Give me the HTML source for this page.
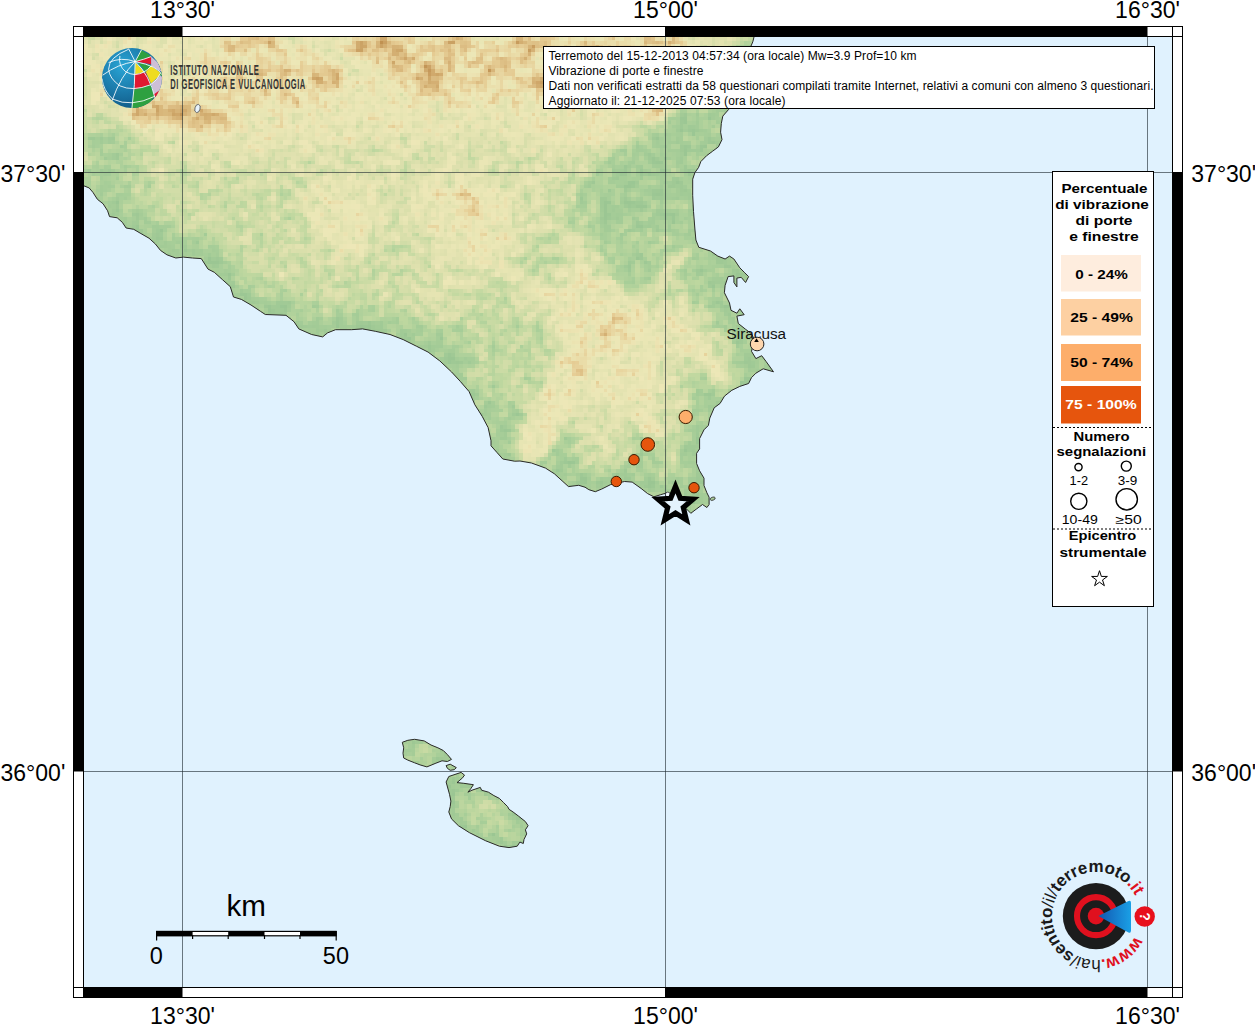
<!DOCTYPE html>
<html><head><meta charset="utf-8">
<style>
html,body{margin:0;padding:0;background:#fff;width:1255px;height:1024px;overflow:hidden}
svg{display:block;font-family:"Liberation Sans",sans-serif}
</style></head><body>
<svg width="1255" height="1024" viewBox="0 0 1255 1024">
<defs>
<clipPath id="mapclip"><rect x="84" y="37" width="1088" height="950"/></clipPath>
<clipPath id="landclip"><path d="M84,36 L754,36 L754,37 L752.8,41.8 L751,46 L748,60 L741,80 L733,100 L728.6,109.5 L722.8,116.1 L721.3,123.5 L720.6,132.2 L722,139.6 L718.4,146.9 L712.5,151.3 L706.6,155.7 L700.8,161.6 L698.6,167.4 L694.9,172.6 L692.7,179.2 L692.7,195.3 L693.5,211.4 L694.9,229 L695.9,240 L698.8,247.3 L710.5,251 L717.8,256.1 L725.1,259 L729.5,256.1 L733.9,259 L739.8,267.8 L744.2,272.2 L748.6,276.6 L745.6,282.5 L741.2,277.3 L736.9,278.1 L736.9,286.9 L733.9,282.5 L733.9,275.9 L728.1,276.6 L725.1,285.4 L724.4,292.7 L729.5,303 L731,310.3 L736.9,313.2 L739.8,308.8 L744.2,314.7 L736.9,316.1 L738.3,323.5 L745.6,329.3 L751.5,333.7 L754.4,339.6 L751.5,351.3 L755.9,358.6 L761.7,355.7 L766.1,361.5 L773.5,371.8 L763.2,368.8 L755.9,373.2 L751.5,377.6 L748.6,383.5 L739.8,386.4 L731.8,390.3 L724.5,396.1 L720.1,403.4 L714.2,407.8 L709.8,418.1 L708.4,425.4 L704,429.8 L699.6,438.6 L699.6,448.9 L696.6,453.3 L696.6,463.5 L699.6,470.8 L704,478.2 L704,485.5 L706.9,492.8 L709.1,497.2 L709.1,504.5 L706.9,507.5 L702.5,504.5 L696.6,508.9 L690.8,513.3 L686.4,508.9 L678,503 L670,496 L666.7,492.9 L660.3,494.8 L653.9,496.8 L647.6,493.6 L641.2,488.5 L632.2,482.1 L624.6,481.5 L610.6,484.6 L601.6,489.1 L595.3,491.7 L588.9,489.7 L585,487.2 L578.7,485.3 L568.5,486.6 L562.1,480.8 L554.4,473.8 L545.5,468.1 L531.5,463 L520,461 L514.5,461.2 L502.8,459 L496.9,452.4 L491,445.8 L491,440.7 L488.1,427.5 L482.3,416.5 L474.9,404.8 L469.1,391.6 L460.3,381.4 L451.5,371.9 L439.8,360.9 L428.1,352.1 L416.4,346.2 L403.2,339.6 L390,334.5 L375.3,331.3 L362.6,328.9 L351.4,329.7 L335.5,329.7 L327.5,332.9 L322.7,336.9 L311.6,334.5 L298.8,328.9 L294,321.7 L286,315.3 L265.3,314.5 L260.6,311.4 L251,305 L241.4,299.4 L233.5,297 L230.3,286.7 L222.3,279.5 L214.3,272.3 L208,269.1 L201.3,258.6 L192.4,258 L183.5,257.1 L175.8,258 L166.9,254.8 L160.5,250.4 L155.4,244 L149,238.2 L140.1,233.1 L133.7,229.3 L126.1,228 L122.3,222.3 L117.2,217.8 L109.5,216.6 L107.6,210.8 L103.1,203.8 L97.4,199.3 L92.9,192.3 L89.1,187.9 L84,185.9 Z M402.3,742.3 L407.8,740.3 L414.6,739.3 L424.2,740.9 L431,745 L437.9,747.8 L443.3,750.5 L447.4,754.6 L451.5,759.4 L447.4,761.5 L442,760.8 L435.1,763.5 L426.9,766.9 L420.1,764.9 L414.6,762.8 L407.8,760.1 L403.7,758 L403,753.2 L403.7,747.8 Z M446.1,765.6 L450.2,764.2 L456.3,767.6 L454.3,769.7 L450.2,770.3 L447.4,768.3 Z M461.1,772.4 L464.5,775.1 L462.5,777.9 L457,782.6 L463.8,783.3 L473.4,784.7 L470.7,788.8 L467.9,792.2 L472,790.2 L480.3,787.4 L481.6,790.2 L488.5,792.2 L493.9,795.6 L499.4,798.4 L503.5,802.5 L507.6,806.6 L509,809.3 L513.1,812 L518.5,816.1 L525.4,821.6 L528.1,825.7 L525.4,829.8 L526.7,833.9 L524,839.4 L523.3,843.5 L519.9,842.1 L517.2,846.2 L509,847.6 L499.4,846.2 L485.7,840.8 L469.3,832.6 L458.4,825.7 L451.5,818.9 L448.8,812 L450.2,806.6 L450.9,801.1 L449.5,794.3 L446.1,782 L448.8,776.5 Z"/></clipPath>
<filter id="b5" x="-50%" y="-50%" width="200%" height="200%"><feGaussianBlur stdDeviation="5"/></filter>
<filter id="b6" x="-50%" y="-50%" width="200%" height="200%"><feGaussianBlur stdDeviation="6"/></filter>
<filter id="b8" x="-50%" y="-50%" width="200%" height="200%"><feGaussianBlur stdDeviation="8"/></filter>
<filter id="b10" x="-50%" y="-50%" width="200%" height="200%"><feGaussianBlur stdDeviation="10"/></filter>
<filter id="b12" x="-50%" y="-50%" width="200%" height="200%"><feGaussianBlur stdDeviation="12"/></filter>
<filter id="b16" x="-50%" y="-50%" width="200%" height="200%"><feGaussianBlur stdDeviation="16"/></filter>
<filter id="pix" x="84" y="37" width="700" height="830" filterUnits="userSpaceOnUse" color-interpolation-filters="sRGB">
 <feFlood x="85" y="38" width="1" height="1" flood-color="#000"/>
 <feComposite width="4" height="4"/>
 <feTile result="grid"/>
 <feComposite in="SourceGraphic" in2="grid" operator="in" result="dots"/>
 <feMorphology in="dots" operator="dilate" radius="1.5"/>
</filter>
<filter id="hypso" x="0" y="0" width="1255" height="1024" filterUnits="userSpaceOnUse" color-interpolation-filters="sRGB">
 <feTurbulence type="fractalNoise" baseFrequency="0.09" numOctaves="3" seed="5" result="n0"/>
 <feColorMatrix in="n0" type="matrix" values="1 0 0 0 0  1 0 0 0 0  1 0 0 0 0  0 0 0 0 1" result="n"/>
 <feComposite in="SourceGraphic" in2="n" operator="arithmetic" k1="0" k2="1" k3="0.55" k4="-0.275" result="e"/>
 <feComponentTransfer in="e">
  <feFuncR type="table" tableValues="0.61 0.66 0.76 0.87 0.93 0.90 0.82 0.74"/>
  <feFuncG type="table" tableValues="0.78 0.81 0.85 0.88 0.91 0.80 0.67 0.55"/>
  <feFuncB type="table" tableValues="0.58 0.60 0.63 0.68 0.72 0.58 0.43 0.30"/>
  <feFuncA type="linear" slope="0" intercept="1"/>
 </feComponentTransfer>
</filter>
<radialGradient id="globeg" cx="0.35" cy="0.3" r="0.8">
 <stop offset="0" stop-color="#2aa6d6"/><stop offset="0.55" stop-color="#1a78a8"/><stop offset="1" stop-color="#0f5580"/>
</radialGradient>
<linearGradient id="megag" x1="0" y1="0" x2="1" y2="0">
 <stop offset="0" stop-color="#1060b0"/><stop offset="1" stop-color="#20a8e8"/>
</linearGradient>
<clipPath id="globeclip"><circle cx="512" cy="512" r="452"/></clipPath>
</defs>
<g clip-path="url(#mapclip)">
<rect x="84" y="37" width="1088" height="950" fill="#e0f2fe"/>
<path d="M84,36 L754,36 L754,37 L752.8,41.8 L751,46 L748,60 L741,80 L733,100 L728.6,109.5 L722.8,116.1 L721.3,123.5 L720.6,132.2 L722,139.6 L718.4,146.9 L712.5,151.3 L706.6,155.7 L700.8,161.6 L698.6,167.4 L694.9,172.6 L692.7,179.2 L692.7,195.3 L693.5,211.4 L694.9,229 L695.9,240 L698.8,247.3 L710.5,251 L717.8,256.1 L725.1,259 L729.5,256.1 L733.9,259 L739.8,267.8 L744.2,272.2 L748.6,276.6 L745.6,282.5 L741.2,277.3 L736.9,278.1 L736.9,286.9 L733.9,282.5 L733.9,275.9 L728.1,276.6 L725.1,285.4 L724.4,292.7 L729.5,303 L731,310.3 L736.9,313.2 L739.8,308.8 L744.2,314.7 L736.9,316.1 L738.3,323.5 L745.6,329.3 L751.5,333.7 L754.4,339.6 L751.5,351.3 L755.9,358.6 L761.7,355.7 L766.1,361.5 L773.5,371.8 L763.2,368.8 L755.9,373.2 L751.5,377.6 L748.6,383.5 L739.8,386.4 L731.8,390.3 L724.5,396.1 L720.1,403.4 L714.2,407.8 L709.8,418.1 L708.4,425.4 L704,429.8 L699.6,438.6 L699.6,448.9 L696.6,453.3 L696.6,463.5 L699.6,470.8 L704,478.2 L704,485.5 L706.9,492.8 L709.1,497.2 L709.1,504.5 L706.9,507.5 L702.5,504.5 L696.6,508.9 L690.8,513.3 L686.4,508.9 L678,503 L670,496 L666.7,492.9 L660.3,494.8 L653.9,496.8 L647.6,493.6 L641.2,488.5 L632.2,482.1 L624.6,481.5 L610.6,484.6 L601.6,489.1 L595.3,491.7 L588.9,489.7 L585,487.2 L578.7,485.3 L568.5,486.6 L562.1,480.8 L554.4,473.8 L545.5,468.1 L531.5,463 L520,461 L514.5,461.2 L502.8,459 L496.9,452.4 L491,445.8 L491,440.7 L488.1,427.5 L482.3,416.5 L474.9,404.8 L469.1,391.6 L460.3,381.4 L451.5,371.9 L439.8,360.9 L428.1,352.1 L416.4,346.2 L403.2,339.6 L390,334.5 L375.3,331.3 L362.6,328.9 L351.4,329.7 L335.5,329.7 L327.5,332.9 L322.7,336.9 L311.6,334.5 L298.8,328.9 L294,321.7 L286,315.3 L265.3,314.5 L260.6,311.4 L251,305 L241.4,299.4 L233.5,297 L230.3,286.7 L222.3,279.5 L214.3,272.3 L208,269.1 L201.3,258.6 L192.4,258 L183.5,257.1 L175.8,258 L166.9,254.8 L160.5,250.4 L155.4,244 L149,238.2 L140.1,233.1 L133.7,229.3 L126.1,228 L122.3,222.3 L117.2,217.8 L109.5,216.6 L107.6,210.8 L103.1,203.8 L97.4,199.3 L92.9,192.3 L89.1,187.9 L84,185.9 Z M402.3,742.3 L407.8,740.3 L414.6,739.3 L424.2,740.9 L431,745 L437.9,747.8 L443.3,750.5 L447.4,754.6 L451.5,759.4 L447.4,761.5 L442,760.8 L435.1,763.5 L426.9,766.9 L420.1,764.9 L414.6,762.8 L407.8,760.1 L403.7,758 L403,753.2 L403.7,747.8 Z M446.1,765.6 L450.2,764.2 L456.3,767.6 L454.3,769.7 L450.2,770.3 L447.4,768.3 Z M461.1,772.4 L464.5,775.1 L462.5,777.9 L457,782.6 L463.8,783.3 L473.4,784.7 L470.7,788.8 L467.9,792.2 L472,790.2 L480.3,787.4 L481.6,790.2 L488.5,792.2 L493.9,795.6 L499.4,798.4 L503.5,802.5 L507.6,806.6 L509,809.3 L513.1,812 L518.5,816.1 L525.4,821.6 L528.1,825.7 L525.4,829.8 L526.7,833.9 L524,839.4 L523.3,843.5 L519.9,842.1 L517.2,846.2 L509,847.6 L499.4,846.2 L485.7,840.8 L469.3,832.6 L458.4,825.7 L451.5,818.9 L448.8,812 L450.2,806.6 L450.9,801.1 L449.5,794.3 L446.1,782 L448.8,776.5 Z" fill="#c9d7a2"/>
<g clip-path="url(#landclip)">
<g filter="url(#pix)">
<g filter="url(#hypso)">
<rect x="84" y="37" width="700" height="830" fill="#6a6a6a"/>
<g filter="url(#b12)" fill="#585858">
 <polygon points="84,172 300,172 380,200 420,260 400,330 300,325 200,262 84,190"/>
</g>
<path d="M754,37 L752.8,41.8 L751,46 L748,60 L741,80 L733,100 L728.6,109.5 L722.8,116.1 L721.3,123.5 L720.6,132.2 L722,139.6 L718.4,146.9 L712.5,151.3 L706.6,155.7 L700.8,161.6 L698.6,167.4 L694.9,172.6 L692.7,179.2 L692.7,195.3 L693.5,211.4 L694.9,229 L695.9,240 L698.8,247.3 L710.5,251 L717.8,256.1 L725.1,259 L729.5,256.1 L733.9,259 L739.8,267.8 L744.2,272.2 L748.6,276.6 L745.6,282.5 L741.2,277.3 L736.9,278.1 L736.9,286.9 L733.9,282.5 L733.9,275.9 L728.1,276.6 L725.1,285.4 L724.4,292.7 L729.5,303 L731,310.3 L736.9,313.2 L739.8,308.8 L744.2,314.7 L736.9,316.1 L738.3,323.5 L745.6,329.3 L751.5,333.7 L754.4,339.6 L751.5,351.3 L755.9,358.6 L761.7,355.7 L766.1,361.5 L773.5,371.8 L763.2,368.8 L755.9,373.2 L751.5,377.6 L748.6,383.5 L739.8,386.4 L731.8,390.3 L724.5,396.1 L720.1,403.4 L714.2,407.8 L709.8,418.1 L708.4,425.4 L704,429.8 L699.6,438.6 L699.6,448.9 L696.6,453.3 L696.6,463.5 L699.6,470.8 L704,478.2 L704,485.5 L706.9,492.8 L709.1,497.2 L709.1,504.5 L706.9,507.5 L702.5,504.5 L696.6,508.9 L690.8,513.3 L686.4,508.9 L678,503 L670,496 L666.7,492.9 L660.3,494.8 L653.9,496.8 L647.6,493.6 L641.2,488.5 L632.2,482.1 L624.6,481.5 L610.6,484.6 L601.6,489.1 L595.3,491.7 L588.9,489.7 L585,487.2 L578.7,485.3 L568.5,486.6 L562.1,480.8 L554.4,473.8 L545.5,468.1 L531.5,463 L520,461 L514.5,461.2 L502.8,459 L496.9,452.4 L491,445.8 L491,440.7 L488.1,427.5 L482.3,416.5 L474.9,404.8 L469.1,391.6 L460.3,381.4 L451.5,371.9 L439.8,360.9 L428.1,352.1 L416.4,346.2 L403.2,339.6 L390,334.5 L375.3,331.3 L362.6,328.9 L351.4,329.7 L335.5,329.7 L327.5,332.9 L322.7,336.9 L311.6,334.5 L298.8,328.9 L294,321.7 L286,315.3 L265.3,314.5 L260.6,311.4 L251,305 L241.4,299.4 L233.5,297 L230.3,286.7 L222.3,279.5 L214.3,272.3 L208,269.1 L201.3,258.6 L192.4,258 L183.5,257.1 L175.8,258 L166.9,254.8 L160.5,250.4 L155.4,244 L149,238.2 L140.1,233.1 L133.7,229.3 L126.1,228 L122.3,222.3 L117.2,217.8 L109.5,216.6 L107.6,210.8 L103.1,203.8 L97.4,199.3 L92.9,192.3 L89.1,187.9 L84,185.9 M402.3,742.3 L407.8,740.3 L414.6,739.3 L424.2,740.9 L431,745 L437.9,747.8 L443.3,750.5 L447.4,754.6 L451.5,759.4 L447.4,761.5 L442,760.8 L435.1,763.5 L426.9,766.9 L420.1,764.9 L414.6,762.8 L407.8,760.1 L403.7,758 L403,753.2 L403.7,747.8 Z M446.1,765.6 L450.2,764.2 L456.3,767.6 L454.3,769.7 L450.2,770.3 L447.4,768.3 Z M461.1,772.4 L464.5,775.1 L462.5,777.9 L457,782.6 L463.8,783.3 L473.4,784.7 L470.7,788.8 L467.9,792.2 L472,790.2 L480.3,787.4 L481.6,790.2 L488.5,792.2 L493.9,795.6 L499.4,798.4 L503.5,802.5 L507.6,806.6 L509,809.3 L513.1,812 L518.5,816.1 L525.4,821.6 L528.1,825.7 L525.4,829.8 L526.7,833.9 L524,839.4 L523.3,843.5 L519.9,842.1 L517.2,846.2 L509,847.6 L499.4,846.2 L485.7,840.8 L469.3,832.6 L458.4,825.7 L451.5,818.9 L448.8,812 L450.2,806.6 L450.9,801.1 L449.5,794.3 L446.1,782 L448.8,776.5 Z" fill="none" stroke="#141414" stroke-width="36" filter="url(#b8)"/>
<g filter="url(#b12)" fill="#1e1e1e">
 <polygon points="590,170 620,140 700,140 720,180 705,240 665,240 610,240 580,250 560,220"/>
 <polygon points="350,322 470,330 505,385 490,420 430,380 380,350"/>
 <polygon points="84,175 150,215 230,280 300,322 240,300 180,250 84,200"/>
 <polygon points="84,120 120,125 150,172 120,180 84,170"/>
 <polygon points="640,110 700,100 730,120 700,175 620,172 600,150"/>
</g>
<g filter="url(#b10)" fill="#868686">
 <polygon points="84,37 600,37 660,45 690,60 640,100 560,125 480,130 420,145 350,140 280,150 200,150 150,120 84,100"/>
 <polygon points="420,175 470,172 505,200 520,250 480,270 440,250 415,215"/>
 <polygon points="300,185 360,178 390,220 360,260 320,250"/>
 <polygon points="600,60 700,37 740,50 700,100 620,110"/>
 <polygon points="480,110 560,100 640,110 650,135 600,150 520,145"/>
</g>
<!-- Hyblean -->
<g filter="url(#b8)" fill="#4a4a4a">
 <polygon points="600,195 585,240 540,280 480,320 462,305 520,255"/>
</g>
<g filter="url(#b8)" fill="#242424">
 <polygon points="602,240 663,240 663,298 632.5,306 612,278"/>

 <polygon points="470,397.5 521,405 566.5,423 584,468.5 546,484 490,448"/>
 <polygon points="635,405 663,397.5 663,494 642.7,494 632.5,456"/>
 <polygon points="673,240 730,265 730,316 698.5,303.5 673,278"/>
 <polygon points="686,367 730,354 730,405 698.5,405"/>
</g>
<g filter="url(#b8)" fill="#4a4a4a">
 <polygon points="470,303.5 559,324 566.5,362 533.5,397.5 470,392"/>
</g>
<g filter="url(#b8)" fill="#8c8c8c">
 <polygon points="565,282 610,285 650,305 660,350 655,400 625,410 590,400 562,380 556,330"/>
</g>
<g filter="url(#b5)" fill="none" stroke="#8c8c8c" stroke-linecap="round">
 <path d="M470,250 L559,303.5" stroke-width="13"/>
 <path d="M571.6,240 L592,311" stroke-width="15"/>
 <path d="M584,354 L533.5,443" stroke-width="36"/>
 <path d="M622,367 L653,430" stroke-width="24"/>
 <path d="M663,316 L724,380" stroke-width="18"/>
 <path d="M640,300 L690,250" stroke-width="8"/>
</g>
<g filter="url(#b6)" fill="#a8a8a8">
 <polygon points="200,60 300,50 350,80 300,110 220,100"/>
 <polygon points="360,37 640,37 620,70 560,95 480,100 420,100 380,80"/>
 <polygon points="120,95 230,95 240,130 130,125"/>
</g>
<g filter="url(#b5)" fill="#d4d4d4">
 <ellipse cx="375" cy="45" rx="30" ry="9"/>
 <ellipse cx="430" cy="76" rx="13" ry="17"/>
 <ellipse cx="455" cy="41" rx="25" ry="5"/>
 <ellipse cx="527" cy="45" rx="20" ry="7"/>
 <ellipse cx="325" cy="77" rx="15" ry="10"/>
 <ellipse cx="536" cy="80" rx="10" ry="6"/>
 <ellipse cx="660" cy="42" rx="30" ry="6"/>
 <ellipse cx="655" cy="112" rx="12" ry="9"/>
 <ellipse cx="170" cy="112" rx="40" ry="8"/>
 <ellipse cx="212" cy="124" rx="16" ry="7"/>
 <ellipse cx="250" cy="45" rx="35" ry="6"/>
 <ellipse cx="590" cy="55" rx="16" ry="8"/>
 <ellipse cx="490" cy="70" rx="12" ry="6"/>
 <ellipse cx="400" cy="60" rx="10" ry="8"/>
 <ellipse cx="612" cy="90" rx="10" ry="6"/>
</g>
<g filter="url(#b5)" fill="#b8b8b8">
 <ellipse cx="470" cy="205" rx="14" ry="14"/>
 <ellipse cx="614" cy="329" rx="18" ry="12"/>
 <ellipse cx="579" cy="364" rx="7" ry="16"/>
</g>
<g fill="#484848" filter="url(#b6)">
 <ellipse cx="490" cy="815" rx="28" ry="14" transform="rotate(35 490 815)"/>
 <ellipse cx="425" cy="752" rx="14" ry="7"/>
</g>
</g>

</g>
</g>
<path d="M754,37 L752.8,41.8 L751,46 L748,60 L741,80 L733,100 L728.6,109.5 L722.8,116.1 L721.3,123.5 L720.6,132.2 L722,139.6 L718.4,146.9 L712.5,151.3 L706.6,155.7 L700.8,161.6 L698.6,167.4 L694.9,172.6 L692.7,179.2 L692.7,195.3 L693.5,211.4 L694.9,229 L695.9,240 L698.8,247.3 L710.5,251 L717.8,256.1 L725.1,259 L729.5,256.1 L733.9,259 L739.8,267.8 L744.2,272.2 L748.6,276.6 L745.6,282.5 L741.2,277.3 L736.9,278.1 L736.9,286.9 L733.9,282.5 L733.9,275.9 L728.1,276.6 L725.1,285.4 L724.4,292.7 L729.5,303 L731,310.3 L736.9,313.2 L739.8,308.8 L744.2,314.7 L736.9,316.1 L738.3,323.5 L745.6,329.3 L751.5,333.7 L754.4,339.6 L751.5,351.3 L755.9,358.6 L761.7,355.7 L766.1,361.5 L773.5,371.8 L763.2,368.8 L755.9,373.2 L751.5,377.6 L748.6,383.5 L739.8,386.4 L731.8,390.3 L724.5,396.1 L720.1,403.4 L714.2,407.8 L709.8,418.1 L708.4,425.4 L704,429.8 L699.6,438.6 L699.6,448.9 L696.6,453.3 L696.6,463.5 L699.6,470.8 L704,478.2 L704,485.5 L706.9,492.8 L709.1,497.2 L709.1,504.5 L706.9,507.5 L702.5,504.5 L696.6,508.9 L690.8,513.3 L686.4,508.9 L678,503 L670,496 L666.7,492.9 L660.3,494.8 L653.9,496.8 L647.6,493.6 L641.2,488.5 L632.2,482.1 L624.6,481.5 L610.6,484.6 L601.6,489.1 L595.3,491.7 L588.9,489.7 L585,487.2 L578.7,485.3 L568.5,486.6 L562.1,480.8 L554.4,473.8 L545.5,468.1 L531.5,463 L520,461 L514.5,461.2 L502.8,459 L496.9,452.4 L491,445.8 L491,440.7 L488.1,427.5 L482.3,416.5 L474.9,404.8 L469.1,391.6 L460.3,381.4 L451.5,371.9 L439.8,360.9 L428.1,352.1 L416.4,346.2 L403.2,339.6 L390,334.5 L375.3,331.3 L362.6,328.9 L351.4,329.7 L335.5,329.7 L327.5,332.9 L322.7,336.9 L311.6,334.5 L298.8,328.9 L294,321.7 L286,315.3 L265.3,314.5 L260.6,311.4 L251,305 L241.4,299.4 L233.5,297 L230.3,286.7 L222.3,279.5 L214.3,272.3 L208,269.1 L201.3,258.6 L192.4,258 L183.5,257.1 L175.8,258 L166.9,254.8 L160.5,250.4 L155.4,244 L149,238.2 L140.1,233.1 L133.7,229.3 L126.1,228 L122.3,222.3 L117.2,217.8 L109.5,216.6 L107.6,210.8 L103.1,203.8 L97.4,199.3 L92.9,192.3 L89.1,187.9 L84,185.9 M402.3,742.3 L407.8,740.3 L414.6,739.3 L424.2,740.9 L431,745 L437.9,747.8 L443.3,750.5 L447.4,754.6 L451.5,759.4 L447.4,761.5 L442,760.8 L435.1,763.5 L426.9,766.9 L420.1,764.9 L414.6,762.8 L407.8,760.1 L403.7,758 L403,753.2 L403.7,747.8 Z M446.1,765.6 L450.2,764.2 L456.3,767.6 L454.3,769.7 L450.2,770.3 L447.4,768.3 Z M461.1,772.4 L464.5,775.1 L462.5,777.9 L457,782.6 L463.8,783.3 L473.4,784.7 L470.7,788.8 L467.9,792.2 L472,790.2 L480.3,787.4 L481.6,790.2 L488.5,792.2 L493.9,795.6 L499.4,798.4 L503.5,802.5 L507.6,806.6 L509,809.3 L513.1,812 L518.5,816.1 L525.4,821.6 L528.1,825.7 L525.4,829.8 L526.7,833.9 L524,839.4 L523.3,843.5 L519.9,842.1 L517.2,846.2 L509,847.6 L499.4,846.2 L485.7,840.8 L469.3,832.6 L458.4,825.7 L451.5,818.9 L448.8,812 L450.2,806.6 L450.9,801.1 L449.5,794.3 L446.1,782 L448.8,776.5 Z" fill="none" stroke="#2a2a2a" stroke-width="1" stroke-linejoin="round"/>
<ellipse cx="712.7" cy="498.7" rx="2.6" ry="1.5" fill="#a8cc98" stroke="#333" stroke-width="0.8" transform="rotate(-20 712.7 498.7)"/>
<circle cx="667.8" cy="494.6" r="2.5" fill="#eef6fc" stroke="#333" stroke-width="0.8"/>
<!-- grid -->
<g stroke="#1e2a30" stroke-opacity="0.62" stroke-width="1">
<line x1="182.5" y1="37" x2="182.5" y2="987"/>
<line x1="665.5" y1="37" x2="665.5" y2="987"/>
<line x1="1147.5" y1="37" x2="1147.5" y2="987"/>
<line x1="84" y1="172.5" x2="1172" y2="172.5"/>
<line x1="84" y1="771.5" x2="1172" y2="771.5"/>
</g>
</g>
<!-- frame -->
<g>
<rect x="73.5" y="26.5" width="1109" height="971" fill="none" stroke="#000" stroke-width="1"/>
<rect x="83.5" y="36.5" width="1089" height="951" fill="none" stroke="#000" stroke-width="1"/>
<g fill="#000">
<rect x="83" y="26" width="99.5" height="11"/>
<rect x="665" y="26" width="482.5" height="11"/>
<rect x="83" y="987" width="99.5" height="11"/>
<rect x="665" y="987" width="482.5" height="11"/>
<rect x="73" y="172" width="11" height="599.5"/>
<rect x="1172" y="172" width="11" height="599.5"/>
</g>
<g stroke="#000" stroke-width="1">
<line x1="83.5" y1="26" x2="83.5" y2="37"/><line x1="1172.5" y1="26" x2="1172.5" y2="37"/>
<line x1="83.5" y1="987" x2="83.5" y2="998"/><line x1="1172.5" y1="987" x2="1172.5" y2="998"/>
<line x1="73" y1="36.5" x2="84" y2="36.5"/><line x1="1172" y1="36.5" x2="1183" y2="36.5"/>
<line x1="73" y1="987.5" x2="84" y2="987.5"/><line x1="1172" y1="987.5" x2="1183" y2="987.5"/>
</g>
</g>
<!-- axis labels -->
<g font-size="23" fill="#000">
<text x="182.5" y="18" text-anchor="middle">13°30'</text>
<text x="665.5" y="18" text-anchor="middle">15°00'</text>
<text x="1147.5" y="18" text-anchor="middle">16°30'</text>
<text x="182.5" y="1024" text-anchor="middle">13°30'</text>
<text x="665.5" y="1024" text-anchor="middle">15°00'</text>
<text x="1147.5" y="1024" text-anchor="middle">16°30'</text>
<text x="65.3" y="182.2" text-anchor="end">37°30'</text>
<text x="65.3" y="781.2" text-anchor="end">36°00'</text>
<text x="1191.3" y="182.2">37°30'</text>
<text x="1191.3" y="781.2">36°00'</text>
</g>
<!-- INGV logo -->
<g transform="translate(98,44) scale(0.0664)">
 <circle cx="512" cy="512" r="452" fill="url(#globeg)"/>
 <g clip-path="url(#globeclip)">
  <polygon points="565,255 650,90 760,150 800,190 580,260" fill="#2ea040"/>
  <polygon points="580,262 800,190 810,310 700,285 600,275" fill="#e01830"/>
  <polygon points="800,190 900,280 960,420 800,330" fill="#cdbfd6"/>
  <polygon points="560,275 700,420 560,460" fill="#eedc20"/>
  <polygon points="600,280 800,320 720,420" fill="#2ea040"/>
  <polygon points="720,420 800,330 940,430 930,470 800,600" fill="#eedc20"/>
  <polygon points="930,420 990,430 990,500 930,470" fill="#2ea040"/>
  <polygon points="550,460 720,430 790,610 550,690" fill="#e01830"/>
  <polygon points="800,600 940,470 990,520 990,700 850,790" fill="#cdbfd6"/>
  <polygon points="540,690 790,615 850,790 700,990 500,990" fill="#2ea040"/>
  <polygon points="840,760 920,700 880,830" fill="#e01830"/>
 </g>
 <g fill="none" stroke="#fff" stroke-width="13" clip-path="url(#globeclip)">
  <path d="M560,265 L460,70"/>
  <path d="M560,265 L660,80"/>
  <path d="M560,265 Q560,600 510,980"/>
  <path d="M560,265 Q340,480 210,860"/>
  <path d="M560,265 Q780,470 860,820"/>
  <path d="M560,265 Q900,330 970,470"/>
  <path d="M460,80 Q160,200 160,380 Q170,520 330,630 Q520,720 790,615 Q900,540 940,440"/>
  <path d="M330,180 Q300,330 420,420 Q500,460 560,460 Q700,450 800,330"/>
  <path d="M60,520 Q80,700 220,830 Q500,960 850,790"/>
  <path d="M70,470 Q300,300 560,265"/>
  <path d="M160,280 Q350,190 560,265 Q700,230 800,190"/>
 </g>
</g>
<g fill="#363636" font-size="14" font-weight="bold">
 <text transform="translate(170.3,75) scale(0.54,1)" letter-spacing="0.872">ISTITUTO NAZIONALE</text>
 <text transform="translate(170.3,89.1) scale(0.54,1)" letter-spacing="0.959">DI GEOFISICA E VULCANOLOGIA</text>
</g>
<ellipse cx="197.5" cy="108.5" rx="2.6" ry="4.2" fill="#e8f4fc" stroke="#555" stroke-width="0.8" transform="rotate(15 197.5 108.5)"/>
<!-- info box -->
<rect x="543.5" y="46.5" width="611" height="62" fill="#fff" stroke="#000" stroke-width="1"/>
<g font-size="12" fill="#000">
<text x="548.5" y="60" textLength="368">Terremoto del 15-12-2013 04:57:34 (ora locale) Mw=3.9 Prof=10 km</text>
<text x="548.5" y="75" textLength="155">Vibrazione di porte e finestre</text>
<text x="548.5" y="90" textLength="605">Dati non verificati estratti da 58 questionari compilati tramite Internet, relativi a comuni con almeno 3 questionari.</text>
<text x="548.5" y="104.6" textLength="237">Aggiornato il: 21-12-2025 07:53 (ora locale)</text>
</g>
<!-- Siracusa -->
<text x="726.6" y="338.8" font-size="15.3" fill="#111" textLength="59.5" lengthAdjust="spacingAndGlyphs">Siracusa</text>
<circle cx="757.1" cy="344" r="6.8" fill="#fdd6ae" stroke="#222" stroke-width="1"/>
<polygon points="756.5,338.2 754.2,342 758.8,342" fill="#000"/>
<!-- dots -->
<g stroke="#3a1a00" stroke-width="1">
<circle cx="685.7" cy="417" r="6.6" fill="#fdae6b"/>
<circle cx="647.8" cy="444.5" r="6.8" fill="#e6550d"/>
<circle cx="634" cy="459.7" r="5.2" fill="#e6550d"/>
<circle cx="616.3" cy="481.5" r="5.2" fill="#e6550d"/>
<circle cx="694" cy="487.7" r="5.2" fill="#e6550d"/>
</g>
<!-- epicentre star -->
<path d="M675.50,486.40 L680.32,498.27 L693.09,499.18 L683.30,507.43 L686.37,519.87 L675.50,513.10 L664.63,519.87 L667.70,507.43 L657.91,499.18 L670.68,498.27 Z" fill="#e4f2fc" stroke="#000" stroke-width="5.2" stroke-linejoin="miter"/>
<!-- legend -->
<rect x="1052.5" y="171.5" width="101" height="435" fill="#fff" stroke="#000" stroke-width="1"/>
<g font-size="12" font-weight="bold" fill="#000" text-anchor="middle">
<text x="1104.5" y="192.8" textLength="86" lengthAdjust="spacingAndGlyphs">Percentuale</text>
<text x="1102" y="208.9" textLength="93.5" lengthAdjust="spacingAndGlyphs">di vibrazione</text>
<text x="1104" y="224.9" textLength="57" lengthAdjust="spacingAndGlyphs">di porte</text>
<text x="1104" y="240.5" textLength="69.5" lengthAdjust="spacingAndGlyphs">e finestre</text>
</g>
<rect x="1061" y="255" width="80" height="36.5" fill="#feedde"/>
<rect x="1061" y="299" width="80" height="36.5" fill="#fdd0a2"/>
<rect x="1061" y="344" width="80" height="37" fill="#fdae6b"/>
<rect x="1061" y="386" width="80" height="37.5" fill="#e6550d"/>
<g font-size="12" font-weight="bold" fill="#000" text-anchor="middle">
<text x="1101.6" y="278.5" textLength="52.5" lengthAdjust="spacingAndGlyphs">0 - 24%</text>
<text x="1101.6" y="321.7" textLength="62.5" lengthAdjust="spacingAndGlyphs">25 - 49%</text>
<text x="1101.6" y="366.9" textLength="62.5" lengthAdjust="spacingAndGlyphs">50 - 74%</text>
<text x="1101" y="408.8" textLength="71.5" lengthAdjust="spacingAndGlyphs" fill="#fff">75 - 100%</text>
<text x="1101.5" y="441.2" textLength="56" lengthAdjust="spacingAndGlyphs">Numero</text>
<text x="1101.3" y="456.4" textLength="89.5" lengthAdjust="spacingAndGlyphs">segnalazioni</text>
<text x="1102.5" y="540.3" textLength="67.5" lengthAdjust="spacingAndGlyphs">Epicentro</text>
<text x="1103" y="556.5" textLength="87" lengthAdjust="spacingAndGlyphs">strumentale</text>
</g>
<line x1="1053" y1="427.5" x2="1153" y2="427.5" stroke="#000" stroke-width="1" stroke-dasharray="2,2"/>
<line x1="1053" y1="529" x2="1153" y2="529" stroke="#000" stroke-width="1" stroke-dasharray="2,2"/>
<g fill="none" stroke="#000" stroke-width="1.4">
<circle cx="1078.5" cy="467.1" r="3.6"/>
<circle cx="1126.3" cy="466.1" r="5"/>
<circle cx="1078.8" cy="501.3" r="8.1"/>
<circle cx="1126.7" cy="499.3" r="10.7"/>
</g>
<g font-size="12" fill="#000" text-anchor="middle">
<text x="1078.8" y="484.9" textLength="18.5" lengthAdjust="spacingAndGlyphs">1-2</text>
<text x="1127.5" y="484.9" textLength="19.5" lengthAdjust="spacingAndGlyphs">3-9</text>
<text x="1079.8" y="523.7" textLength="36" lengthAdjust="spacingAndGlyphs">10-49</text>
<text x="1128.6" y="523.7" textLength="26" lengthAdjust="spacingAndGlyphs">≥50</text>
</g>
<path d="M1099.50,570.70 L1101.36,576.43 L1107.39,576.44 L1102.52,579.98 L1104.38,585.71 L1099.50,582.17 L1094.62,585.71 L1096.48,579.98 L1091.61,576.44 L1097.64,576.43 Z" fill="none" stroke="#000" stroke-width="1"/>
<!-- scale bar -->
<g>
<rect x="156" y="930.8" width="180.7" height="5.6" fill="#000"/>
<rect x="192.6" y="932" width="35.6" height="3.2" fill="#fff"/>
<rect x="264.5" y="932" width="35.5" height="3.2" fill="#fff"/>
<g stroke="#000" stroke-width="1.2">
<line x1="156.6" y1="931" x2="156.6" y2="940.5"/>
<line x1="192.6" y1="935" x2="192.6" y2="939"/>
<line x1="228.2" y1="935" x2="228.2" y2="939"/>
<line x1="264.5" y1="935" x2="264.5" y2="939"/>
<line x1="300" y1="935" x2="300" y2="939"/>
<line x1="336.2" y1="931" x2="336.2" y2="940.5"/>
</g>
<text x="226.5" y="916" font-size="30" fill="#000" textLength="39.5" lengthAdjust="spacingAndGlyphs">km</text>
<text x="156.4" y="964.3" font-size="23.5" fill="#000" text-anchor="middle">0</text>
<text x="335.9" y="964.3" font-size="23.5" fill="#000" text-anchor="middle">50</text>
</g>
<!-- haisentito logo -->
<g>
<defs><path id="ring" d="M1135.03,936.32 A44,44 0 1,1 1135.2,896.0"/>
<linearGradient id="megag2" x1="0" y1="0" x2="1" y2="0"><stop offset="0" stop-color="#1256b0"/><stop offset="1" stop-color="#1aa0e6"/></linearGradient></defs>
<circle cx="1096" cy="916.1" r="33.2" fill="#1c1c1c"/>
<circle cx="1096" cy="916.1" r="19" fill="none" stroke="#e0101e" stroke-width="6.1"/>
<circle cx="1096" cy="916.1" r="8.3" fill="#e0101e"/>
<path d="M1098.4,916.1 L1128.5,901 Q1131,900 1131,903 L1131,930.5 Q1131,933.6 1128.5,932.6 Z" fill="url(#megag2)"/>
<circle cx="1144.7" cy="916.5" r="10.2" fill="#e8101c"/>
<text x="1144.7" y="921.3" font-size="14" font-weight="bold" fill="#fff" text-anchor="middle" transform="rotate(90 1144.7 916.5)">?</text>
<text font-size="17" font-weight="bold" fill="#1a1a1a"><textPath href="#ring" textLength="234" lengthAdjust="spacing"><tspan fill="#e0101e">www.</tspan><tspan font-weight="normal">hai/</tspan>sentito<tspan font-weight="normal">/il/</tspan>terremoto<tspan fill="#e0101e">.it</tspan></textPath></text>
</g>
</svg>
</body></html>
